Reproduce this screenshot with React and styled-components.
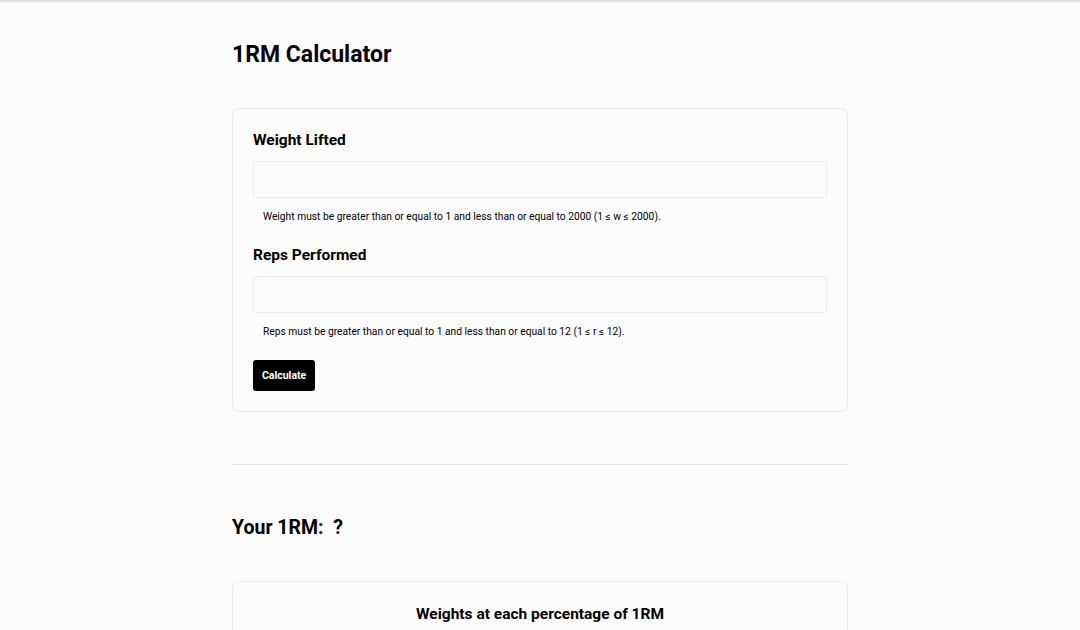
import styled, { createGlobalStyle } from 'styled-components';

const GlobalStyle = createGlobalStyle`
  html, body {
    margin: 0;
    padding: 0;
    background: #fdfcfd;
  }
  body {
    border-top: 2px solid #e2e2e2;
    font-family: Roboto, "Liberation Sans", sans-serif;
    color: #000;
  }
`;

const Page = styled.main`
  width: 616px;
  margin: 0 auto;
  padding-top: 38px;
`;

const Title = styled.h1`
  margin: 0 0 38px;
  font-size: 23px;
  line-height: 30px;
  font-weight: 700;
`;

const Card = styled.section`
  border: 1px solid #e9e9ec;
  border-radius: 8px;
  background: #fdfcfd;
  padding: ${p => p.$pad || '20px'};
`;

const Label = styled.h2`
  margin: 0 0 ${p => p.$mb || '10px'};
  font-size: 15.5px;
  line-height: 22px;
  font-weight: 700;
  text-align: ${p => p.$center ? 'center' : 'left'};
`;

const Input = styled.input`
  display: block;
  box-sizing: border-box;
  width: 100%;
  height: 37px;
  border: 1px solid #ececef;
  border-radius: 2px;
  background: #fdfcfd;
  outline: none;
`;

const Help = styled.p`
  margin: 12px 0 ${p => p.$mb || '20px'} 10px;
  font-size: 10.25px;
  line-height: 14px;
`;

const Button = styled.button`
  display: block;
  height: 31px;
  padding: 0 9px;
  border: none;
  border-radius: 3px;
  background: #000;
  color: #fff;
  font-family: inherit;
  font-size: 10.5px;
  font-weight: 700;
`;

const Rule = styled.hr`
  margin: 52px 0 50px;
  border: none;
  border-top: 1px solid #e6e6e9;
`;

const Result = styled.h2`
  margin: 0 0 40px;
  font-size: 19.5px;
  line-height: 26px;
  font-weight: 700;
  white-space: pre;
`;

export default function App() {
  return (
    <>
      <GlobalStyle />
      <Page>
        <Title>1RM Calculator</Title>
        <Card>
          <Label>Weight Lifted</Label>
          <Input type="number" />
          <Help>Weight must be greater than or equal to 1 and less than or equal to 2000 (1 ≤ w ≤ 2000).</Help>
          <Label>Reps Performed</Label>
          <Input type="number" />
          <Help $mb="21px">Reps must be greater than or equal to 1 and less than or equal to 12 (1 ≤ r ≤ 12).</Help>
          <Button>Calculate</Button>
        </Card>
        <Rule />
        <Result>Your 1RM:  ?</Result>
        <Card $pad="21px 20px 60px">
          <Label $center $mb="0">Weights at each percentage of 1RM</Label>
        </Card>
      </Page>
    </>
  );
}
